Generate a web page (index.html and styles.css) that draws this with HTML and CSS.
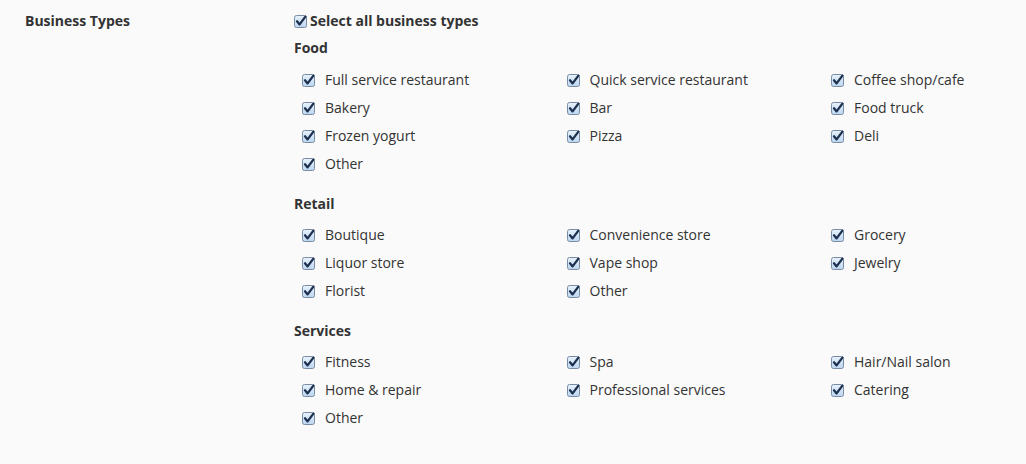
FILE: index.html
```html
<!DOCTYPE html>
<html>
<head>
<meta charset="utf-8">
<link rel="stylesheet" href="styles.css">
</head>
<body>
<div class="form-row">
  <div class="label">Business Types</div>
  <div class="field">
    <label class="select-all"><span class="cb"><svg viewBox="0 0 13 13" width="13" height="13"><defs><linearGradient id="g" x1="0" y1="0" x2="0" y2="1"><stop offset="0" stop-color="#e8f2fc"/><stop offset="1" stop-color="#bcd6f0"/></linearGradient></defs><rect x="0.5" y="0.5" width="12" height="12" rx="2" fill="url(#g)" stroke="#7a8ca3"/><path d="M3 6.3 L5.6 9.4 L11.4 1.6" fill="none" stroke="#1d3050" stroke-width="2.3" stroke-linecap="round" stroke-linejoin="round"/></svg></span>Select all business types</label>

    <div class="group">
      <div class="group-title food">Food</div>
      <div class="items">
        <label class="item"><span class="cb"><svg viewBox="0 0 13 13" width="13" height="13"><rect x="0.5" y="0.5" width="12" height="12" rx="2" fill="url(#g)" stroke="#7a8ca3"/><path d="M3 6.3 L5.6 9.4 L11.4 1.6" fill="none" stroke="#1d3050" stroke-width="2.3" stroke-linecap="round" stroke-linejoin="round"/></svg></span>Full service restaurant</label>
        <label class="item"><span class="cb"><svg viewBox="0 0 13 13" width="13" height="13"><rect x="0.5" y="0.5" width="12" height="12" rx="2" fill="url(#g)" stroke="#7a8ca3"/><path d="M3 6.3 L5.6 9.4 L11.4 1.6" fill="none" stroke="#1d3050" stroke-width="2.3" stroke-linecap="round" stroke-linejoin="round"/></svg></span>Quick service restaurant</label>
        <label class="item"><span class="cb"><svg viewBox="0 0 13 13" width="13" height="13"><rect x="0.5" y="0.5" width="12" height="12" rx="2" fill="url(#g)" stroke="#7a8ca3"/><path d="M3 6.3 L5.6 9.4 L11.4 1.6" fill="none" stroke="#1d3050" stroke-width="2.3" stroke-linecap="round" stroke-linejoin="round"/></svg></span>Coffee shop/cafe</label>
        <label class="item"><span class="cb"><svg viewBox="0 0 13 13" width="13" height="13"><rect x="0.5" y="0.5" width="12" height="12" rx="2" fill="url(#g)" stroke="#7a8ca3"/><path d="M3 6.3 L5.6 9.4 L11.4 1.6" fill="none" stroke="#1d3050" stroke-width="2.3" stroke-linecap="round" stroke-linejoin="round"/></svg></span>Bakery</label>
        <label class="item"><span class="cb"><svg viewBox="0 0 13 13" width="13" height="13"><rect x="0.5" y="0.5" width="12" height="12" rx="2" fill="url(#g)" stroke="#7a8ca3"/><path d="M3 6.3 L5.6 9.4 L11.4 1.6" fill="none" stroke="#1d3050" stroke-width="2.3" stroke-linecap="round" stroke-linejoin="round"/></svg></span>Bar</label>
        <label class="item"><span class="cb"><svg viewBox="0 0 13 13" width="13" height="13"><rect x="0.5" y="0.5" width="12" height="12" rx="2" fill="url(#g)" stroke="#7a8ca3"/><path d="M3 6.3 L5.6 9.4 L11.4 1.6" fill="none" stroke="#1d3050" stroke-width="2.3" stroke-linecap="round" stroke-linejoin="round"/></svg></span>Food truck</label>
        <label class="item"><span class="cb"><svg viewBox="0 0 13 13" width="13" height="13"><rect x="0.5" y="0.5" width="12" height="12" rx="2" fill="url(#g)" stroke="#7a8ca3"/><path d="M3 6.3 L5.6 9.4 L11.4 1.6" fill="none" stroke="#1d3050" stroke-width="2.3" stroke-linecap="round" stroke-linejoin="round"/></svg></span>Frozen yogurt</label>
        <label class="item"><span class="cb"><svg viewBox="0 0 13 13" width="13" height="13"><rect x="0.5" y="0.5" width="12" height="12" rx="2" fill="url(#g)" stroke="#7a8ca3"/><path d="M3 6.3 L5.6 9.4 L11.4 1.6" fill="none" stroke="#1d3050" stroke-width="2.3" stroke-linecap="round" stroke-linejoin="round"/></svg></span>Pizza</label>
        <label class="item"><span class="cb"><svg viewBox="0 0 13 13" width="13" height="13"><rect x="0.5" y="0.5" width="12" height="12" rx="2" fill="url(#g)" stroke="#7a8ca3"/><path d="M3 6.3 L5.6 9.4 L11.4 1.6" fill="none" stroke="#1d3050" stroke-width="2.3" stroke-linecap="round" stroke-linejoin="round"/></svg></span>Deli</label>
        <label class="item"><span class="cb"><svg viewBox="0 0 13 13" width="13" height="13"><rect x="0.5" y="0.5" width="12" height="12" rx="2" fill="url(#g)" stroke="#7a8ca3"/><path d="M3 6.3 L5.6 9.4 L11.4 1.6" fill="none" stroke="#1d3050" stroke-width="2.3" stroke-linecap="round" stroke-linejoin="round"/></svg></span>Other</label>
      </div>
    </div>

    <div class="group">
      <div class="group-title">Retail</div>
      <div class="items">
        <label class="item"><span class="cb"><svg viewBox="0 0 13 13" width="13" height="13"><rect x="0.5" y="0.5" width="12" height="12" rx="2" fill="url(#g)" stroke="#7a8ca3"/><path d="M3 6.3 L5.6 9.4 L11.4 1.6" fill="none" stroke="#1d3050" stroke-width="2.3" stroke-linecap="round" stroke-linejoin="round"/></svg></span>Boutique</label>
        <label class="item"><span class="cb"><svg viewBox="0 0 13 13" width="13" height="13"><rect x="0.5" y="0.5" width="12" height="12" rx="2" fill="url(#g)" stroke="#7a8ca3"/><path d="M3 6.3 L5.6 9.4 L11.4 1.6" fill="none" stroke="#1d3050" stroke-width="2.3" stroke-linecap="round" stroke-linejoin="round"/></svg></span>Convenience store</label>
        <label class="item"><span class="cb"><svg viewBox="0 0 13 13" width="13" height="13"><rect x="0.5" y="0.5" width="12" height="12" rx="2" fill="url(#g)" stroke="#7a8ca3"/><path d="M3 6.3 L5.6 9.4 L11.4 1.6" fill="none" stroke="#1d3050" stroke-width="2.3" stroke-linecap="round" stroke-linejoin="round"/></svg></span>Grocery</label>
        <label class="item"><span class="cb"><svg viewBox="0 0 13 13" width="13" height="13"><rect x="0.5" y="0.5" width="12" height="12" rx="2" fill="url(#g)" stroke="#7a8ca3"/><path d="M3 6.3 L5.6 9.4 L11.4 1.6" fill="none" stroke="#1d3050" stroke-width="2.3" stroke-linecap="round" stroke-linejoin="round"/></svg></span>Liquor store</label>
        <label class="item"><span class="cb"><svg viewBox="0 0 13 13" width="13" height="13"><rect x="0.5" y="0.5" width="12" height="12" rx="2" fill="url(#g)" stroke="#7a8ca3"/><path d="M3 6.3 L5.6 9.4 L11.4 1.6" fill="none" stroke="#1d3050" stroke-width="2.3" stroke-linecap="round" stroke-linejoin="round"/></svg></span>Vape shop</label>
        <label class="item"><span class="cb"><svg viewBox="0 0 13 13" width="13" height="13"><rect x="0.5" y="0.5" width="12" height="12" rx="2" fill="url(#g)" stroke="#7a8ca3"/><path d="M3 6.3 L5.6 9.4 L11.4 1.6" fill="none" stroke="#1d3050" stroke-width="2.3" stroke-linecap="round" stroke-linejoin="round"/></svg></span>Jewelry</label>
        <label class="item"><span class="cb"><svg viewBox="0 0 13 13" width="13" height="13"><rect x="0.5" y="0.5" width="12" height="12" rx="2" fill="url(#g)" stroke="#7a8ca3"/><path d="M3 6.3 L5.6 9.4 L11.4 1.6" fill="none" stroke="#1d3050" stroke-width="2.3" stroke-linecap="round" stroke-linejoin="round"/></svg></span>Florist</label>
        <label class="item"><span class="cb"><svg viewBox="0 0 13 13" width="13" height="13"><rect x="0.5" y="0.5" width="12" height="12" rx="2" fill="url(#g)" stroke="#7a8ca3"/><path d="M3 6.3 L5.6 9.4 L11.4 1.6" fill="none" stroke="#1d3050" stroke-width="2.3" stroke-linecap="round" stroke-linejoin="round"/></svg></span>Other</label>
      </div>
    </div>

    <div class="group">
      <div class="group-title">Services</div>
      <div class="items">
        <label class="item"><span class="cb"><svg viewBox="0 0 13 13" width="13" height="13"><rect x="0.5" y="0.5" width="12" height="12" rx="2" fill="url(#g)" stroke="#7a8ca3"/><path d="M3 6.3 L5.6 9.4 L11.4 1.6" fill="none" stroke="#1d3050" stroke-width="2.3" stroke-linecap="round" stroke-linejoin="round"/></svg></span>Fitness</label>
        <label class="item"><span class="cb"><svg viewBox="0 0 13 13" width="13" height="13"><rect x="0.5" y="0.5" width="12" height="12" rx="2" fill="url(#g)" stroke="#7a8ca3"/><path d="M3 6.3 L5.6 9.4 L11.4 1.6" fill="none" stroke="#1d3050" stroke-width="2.3" stroke-linecap="round" stroke-linejoin="round"/></svg></span>Spa</label>
        <label class="item"><span class="cb"><svg viewBox="0 0 13 13" width="13" height="13"><rect x="0.5" y="0.5" width="12" height="12" rx="2" fill="url(#g)" stroke="#7a8ca3"/><path d="M3 6.3 L5.6 9.4 L11.4 1.6" fill="none" stroke="#1d3050" stroke-width="2.3" stroke-linecap="round" stroke-linejoin="round"/></svg></span>Hair/Nail salon</label>
        <label class="item"><span class="cb"><svg viewBox="0 0 13 13" width="13" height="13"><rect x="0.5" y="0.5" width="12" height="12" rx="2" fill="url(#g)" stroke="#7a8ca3"/><path d="M3 6.3 L5.6 9.4 L11.4 1.6" fill="none" stroke="#1d3050" stroke-width="2.3" stroke-linecap="round" stroke-linejoin="round"/></svg></span>Home &amp; repair</label>
        <label class="item"><span class="cb"><svg viewBox="0 0 13 13" width="13" height="13"><rect x="0.5" y="0.5" width="12" height="12" rx="2" fill="url(#g)" stroke="#7a8ca3"/><path d="M3 6.3 L5.6 9.4 L11.4 1.6" fill="none" stroke="#1d3050" stroke-width="2.3" stroke-linecap="round" stroke-linejoin="round"/></svg></span>Professional services</label>
        <label class="item"><span class="cb"><svg viewBox="0 0 13 13" width="13" height="13"><rect x="0.5" y="0.5" width="12" height="12" rx="2" fill="url(#g)" stroke="#7a8ca3"/><path d="M3 6.3 L5.6 9.4 L11.4 1.6" fill="none" stroke="#1d3050" stroke-width="2.3" stroke-linecap="round" stroke-linejoin="round"/></svg></span>Catering</label>
        <label class="item"><span class="cb"><svg viewBox="0 0 13 13" width="13" height="13"><rect x="0.5" y="0.5" width="12" height="12" rx="2" fill="url(#g)" stroke="#7a8ca3"/><path d="M3 6.3 L5.6 9.4 L11.4 1.6" fill="none" stroke="#1d3050" stroke-width="2.3" stroke-linecap="round" stroke-linejoin="round"/></svg></span>Other</label>
      </div>
    </div>
  </div>
</div>
</body>
</html>
```

FILE: styles.css
```css
html, body {
  margin: 0;
  padding: 0;
  background: #fafafa;
}
body {
  font-family: "Open Sans", "Noto Sans", sans-serif;
  font-size: 14px;
  color: #333;
  width: 1026px;
  height: 464px;
  overflow: hidden;
}
.form-row {
  display: flex;
  padding-top: 11px;
}
.label {
  flex: none;
  width: 269px;
  padding-left: 25px;
  font-weight: 700;
  line-height: 20px;
}
.field {
  flex: none;
  width: 732px;
}
.select-all {
  display: flex;
  align-items: center;
  font-weight: 700;
  line-height: 20px;
}
.select-all .cb {
  margin-right: 3px;
}
.cb {
  display: inline-flex;
  width: 13px;
  height: 13px;
  flex: none;
}
.cb svg {
  display: block;
  overflow: visible;
}
.group {
  margin-bottom: 16px;
}
.group-title {
  font-weight: 700;
  line-height: 20px;
  margin-bottom: 7px;
}
.group-title.food {
  margin-top: 7px;
  margin-bottom: 8px;
}
.items {
  display: grid;
  grid-template-columns: 264.5px 264.5px 200px;
  padding-left: 8px;
}
.item {
  display: flex;
  align-items: center;
  height: 28px;
  line-height: 28px;
  white-space: nowrap;
}
.item .cb {
  margin-right: 10px;
}
```
